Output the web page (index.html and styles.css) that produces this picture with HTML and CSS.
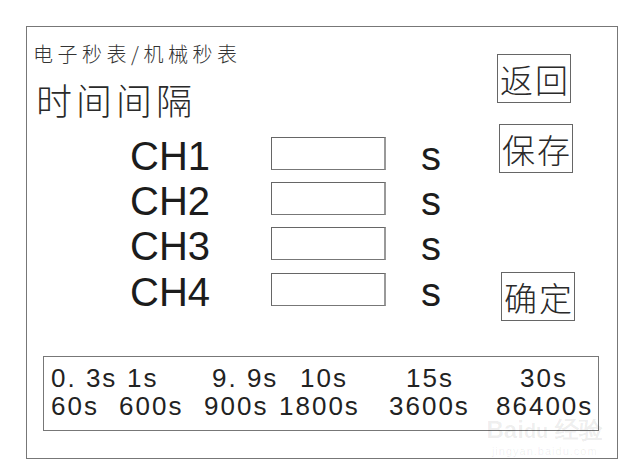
FILE: index.html
```html
<!DOCTYPE html>
<html>
<head>
<meta charset="utf-8">
<title>时间间隔</title>
<link rel="stylesheet" href="styles.css">
</head>
<body>
<div class="panel">
	<div class="main">
		<div class="title">电子秒表/机械秒表</div>
		<div class="heading">时间间隔</div>
		<ul class="channels">
			<li><span class="ch">CH1</span><i class="field"></i><span class="unit">s</span></li>
			<li><span class="ch">CH2</span><i class="field"></i><span class="unit">s</span></li>
			<li><span class="ch">CH3</span><i class="field"></i><span class="unit">s</span></li>
			<li class="last"><span class="ch">CH4</span><i class="field"></i><span class="unit">s</span></li>
		</ul>
	</div>
	<div class="side">
		<a class="btn back">返回</a>
		<a class="btn save">保存</a>
		<a class="btn ok">确定</a>
	</div>
	<div class="scale">
		<div class="row row1">
			<span>0. 3s</span><span>1s</span><span>9. 9s</span><span>10s</span><span>15s</span><span>30s</span>
		</div>
		<div class="row row2">
			<span>60s</span><span>600s</span><span>900s</span><span>1800s</span><span>3600s</span><span>86400s</span>
		</div>
	</div>
	<div class="mark">
		<p class="logo">Bai<b>du</b> 经验</p>
		<p class="site">jingyan.baidu.com</p>
	</div>
</div>
</body>
</html>
```
FILE: styles.css
```css
body{
	margin:0;
	background:#fff;
	font-family:"Noto Sans CJK SC",sans-serif;
}
ul,p{
	margin:0;
	padding:0;
	list-style:none;
}
.panel{
	position:relative;
	box-sizing:border-box;
	width:592px;
	height:433px;
	margin:26px 0 0 26px;
	border:1px solid #777;
	display:grid;
	grid-template-columns:470px 1fr;
	grid-template-rows:auto auto;
	align-content:start;
}
/* 左侧标题和通道 */
.main{
	padding-left:6px;
}
.title{
	margin-top:17px;
	font-size:20px;
	line-height:20px;
	letter-spacing:4.5px;
	font-weight:300;
	color:#333;
}
.heading{
	margin-top:17px;
	padding-left:3px;
	font-size:36px;
	line-height:36px;
	letter-spacing:4px;
	font-weight:300;
	color:#2a2a2a;
}
.channels{
	margin-top:19px;
	padding-left:97px;
}
.channels>li{
	display:flex;
	align-items:baseline;
	height:40px;
	margin-bottom:5px;
	font-family:"Liberation Sans",Arial,sans-serif;
	font-size:40px;
	line-height:40px;
	color:#1c1c1c;
}
.channels>li.last{
	margin:6px 0 0 0;
}
.channels .ch{
	width:141px;
}
.channels .field{
	box-sizing:border-box;
	width:115px;
	height:33px;
	border:1px solid #666;
	border-right:2px solid #999;
	border-bottom-color:#777;
}
.channels .unit{
	margin-left:35px;
}
/* 右侧按钮 */
.side{
	display:flex;
	flex-direction:column;
	align-items:flex-start;
	padding-top:27px;
}
.btn{
	box-sizing:border-box;
	width:74px;
	height:49px;
	border:1px solid #666;
	display:flex;
	align-items:center;
	justify-content:center;
	padding-left:2px;
	white-space:nowrap;
	font-size:33px;
	letter-spacing:2px;
	font-weight:300;
	color:#2a2a2a;
	cursor:pointer;
}
.save{
	margin:21px 0 0 2px;
}
.ok{
	margin:99px 0 0 4px;
}
/* 底部量程 */
.scale{
	grid-column:1 / 3;
	box-sizing:border-box;
	height:75px;
	margin:35px 18px 0 16px;
	border:1px solid #777;
	padding:7px 0 0 7px;
	font-family:"Liberation Sans",Arial,sans-serif;
	font-size:26px;
	line-height:28px;
	letter-spacing:2px;
	color:#222;
}
.row{
	display:grid;
	white-space:pre;
}
.row1{
	grid-template-columns:76px 85px 88px 106px 114px auto;
}
.row2{
	grid-template-columns:68px 85px 75px 110px 107px auto;
}
/* 水印 */
.mark{
	position:absolute;
	right:14px;
	bottom:0;
	text-align:center;
	color:rgba(0,0,0,0.07);
	font-family:"Liberation Sans",Arial,sans-serif;
}
.mark .logo{
	font-size:24px;
	line-height:26px;
	font-weight:bold;
}
.mark .logo b{
	font-size:20px;
}
.mark .site{
	font-size:11px;
	line-height:14px;
	letter-spacing:1px;
}
```
